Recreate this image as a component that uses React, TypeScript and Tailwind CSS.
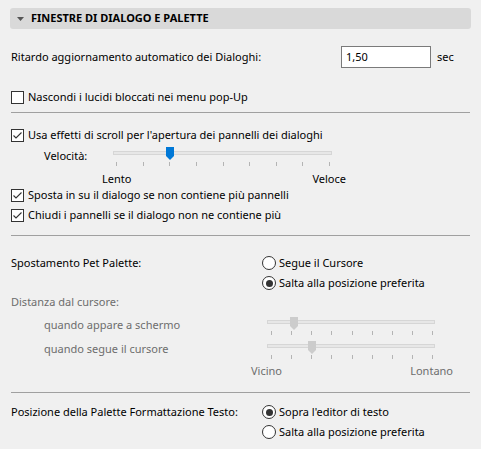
import React from "react";

function Check({ checked, label }: { checked?: boolean; label: string }) {
  return (
    <div className="flex h-[20px] items-center">
      <span className="flex h-[13px] w-[13px] flex-none items-center justify-center border border-[#333333] bg-white">
        {checked ? (
          <svg width="11" height="11" viewBox="0 0 11 11">
            <path d="M1.5 5.5 L4 8 L9.5 2.5" fill="none" stroke="#333333" strokeWidth="1.1" />
          </svg>
        ) : null}
      </span>
      <span className="ml-[4px] whitespace-nowrap">{label}</span>
    </div>
  );
}

function Radio({ checked, label }: { checked?: boolean; label: string }) {
  return (
    <div className="flex h-[20px] items-center">
      <span className="flex h-[14px] w-[14px] flex-none items-center justify-center rounded-full border border-[#333333] bg-white">
        {checked ? <span className="h-[7px] w-[7px] rounded-full bg-[#333333]" /> : null}
      </span>
      <span className="ml-[3px] whitespace-nowrap">{label}</span>
    </div>
  );
}

function Slider({
  width,
  height,
  trackTop,
  thumbTop,
  thumbCenter,
  tickTop,
  firstTick,
  lastTick,
  disabled,
}: {
  width: number;
  height: number;
  trackTop: number;
  thumbTop: number;
  thumbCenter: number;
  tickTop: number;
  firstTick: number;
  lastTick: number;
  disabled?: boolean;
}) {
  const ticks = Array.from({ length: 9 }, (_, i) => firstTick + ((lastTick - firstTick) * i) / 8);
  const fill = disabled ? "#cccccc" : "#0078d7";
  return (
    <div className="relative flex-none" style={{ width, height }}>
      <div
        className="absolute left-0 right-0 h-[4px] border border-[#d6d6d6] bg-[#e7e7e7]"
        style={{ top: trackTop }}
      />
      <svg className="absolute" width="8" height="13" viewBox="0 0 8 13" style={{ top: thumbTop, left: thumbCenter - 4 }}>
        <path d="M0 0 H8 V9 L4 13 L0 9 Z" fill={fill} />
      </svg>
      {ticks.map((x, i) => (
        <div
          key={i}
          className="absolute h-[4px] w-px bg-[#b4b4b4]"
          style={{ top: tickTop, left: Math.round(x) }}
        />
      ))}
    </div>
  );
}

function Divider({ className = "" }: { className?: string }) {
  return <div className={`h-px bg-[#a0a0a0] ${className}`} />;
}

export default function App() {
  return (
    <div className="h-[449px] w-[481px] bg-[#f0f0f0] px-[10px] pt-[8px] font-['Noto_Sans',sans-serif] text-[11px] text-black">
      <div className="flex h-[21px] items-center rounded-[3px] bg-[#d9d9d9] pl-[7px]">
        <svg width="7" height="4" viewBox="0 0 7 4">
          <path d="M0 0 H7 L3.5 4 Z" fill="#555555" />
        </svg>
        <span className="ml-[7px] font-bold">FINESTRE DI DIALOGO E PALETTE</span>
      </div>

      <div className="px-[1px]">
        <div className="mt-[17px] flex h-[22px] items-center">
          <span className="w-[330px] flex-none">Ritardo aggiornamento automatico dei Dialoghi:</span>
          <div className="flex h-[22px] w-[90px] items-center border border-[#7a7a7a] bg-white px-[4px]">1,50</div>
          <span className="ml-[6px]">sec</span>
        </div>

        <div className="mt-[19px]">
          <Check label="Nascondi i lucidi bloccati nei menu pop-Up" />
        </div>

        <Divider className="mt-[5px]" />

        <div className="mt-[12px]">
          <Check checked label="Usa effetti di scroll per l'apertura dei pannelli dei dialoghi" />
        </div>

        <div className="flex h-[26px]">
          <span className="h-[22px] w-[102px] flex-none pl-[33px] leading-[22px]">Velocità:</span>
          <Slider
            width={219}
            height={26}
            trackTop={6}
            thumbTop={2}
            thumbCenter={57}
            tickTop={17}
            firstTick={3}
            lastTick={216}
          />
        </div>
        <div className="ml-[91px] flex h-[14px] w-[244px] items-center justify-between leading-none">
          <span>Lento</span>
          <span>Veloce</span>
        </div>

        <Check checked label="Sposta in su il dialogo se non contiene più pannelli" />
        <Check checked label="Chiudi i pannelli se il dialogo non ne contiene più" />

        <Divider className="mt-[10px]" />

        <div className="mt-[17px] flex">
          <div className="flex h-[20px] w-[251px] flex-none items-center">Spostamento Pet Palette:</div>
          <div>
            <Radio label="Segue il Cursore" />
            <Radio checked label="Salta alla posizione preferita" />
          </div>
        </div>

        <div className="flex h-[18px] items-center text-[#6d6d6d]">Distanza dal cursore:</div>

        <div className="flex h-[24px] text-[#6d6d6d]">
          <span className="h-[24px] w-[256px] flex-none pl-[33px] pt-[4px] leading-[20px]">quando appare a schermo</span>
          <Slider
            width={168}
            height={24}
            trackTop={9}
            thumbTop={6}
            thumbCenter={27}
            tickTop={20}
            firstTick={4}
            lastTick={165}
            disabled
          />
        </div>
        <div className="flex h-[24px] text-[#6d6d6d]">
          <span className="h-[24px] w-[256px] flex-none pl-[33px] pt-[4px] leading-[20px]">quando segue il cursore</span>
          <Slider
            width={168}
            height={24}
            trackTop={9}
            thumbTop={6}
            thumbCenter={45}
            tickTop={20}
            firstTick={4}
            lastTick={165}
            disabled
          />
        </div>
        <div className="ml-[240px] flex h-[24px] w-[202px] items-center justify-between text-[#6d6d6d]">
          <span>Vicino</span>
          <span>Lontano</span>
        </div>

        <Divider className="mt-[9px]" />

        <div className="mt-[9px] flex">
          <div className="flex h-[20px] w-[251px] flex-none items-center">Posizione della Palette Formattazione Testo:</div>
          <div>
            <Radio checked label="Sopra l'editor di testo" />
            <Radio label="Salta alla posizione preferita" />
          </div>
        </div>
      </div>
    </div>
  );
}
